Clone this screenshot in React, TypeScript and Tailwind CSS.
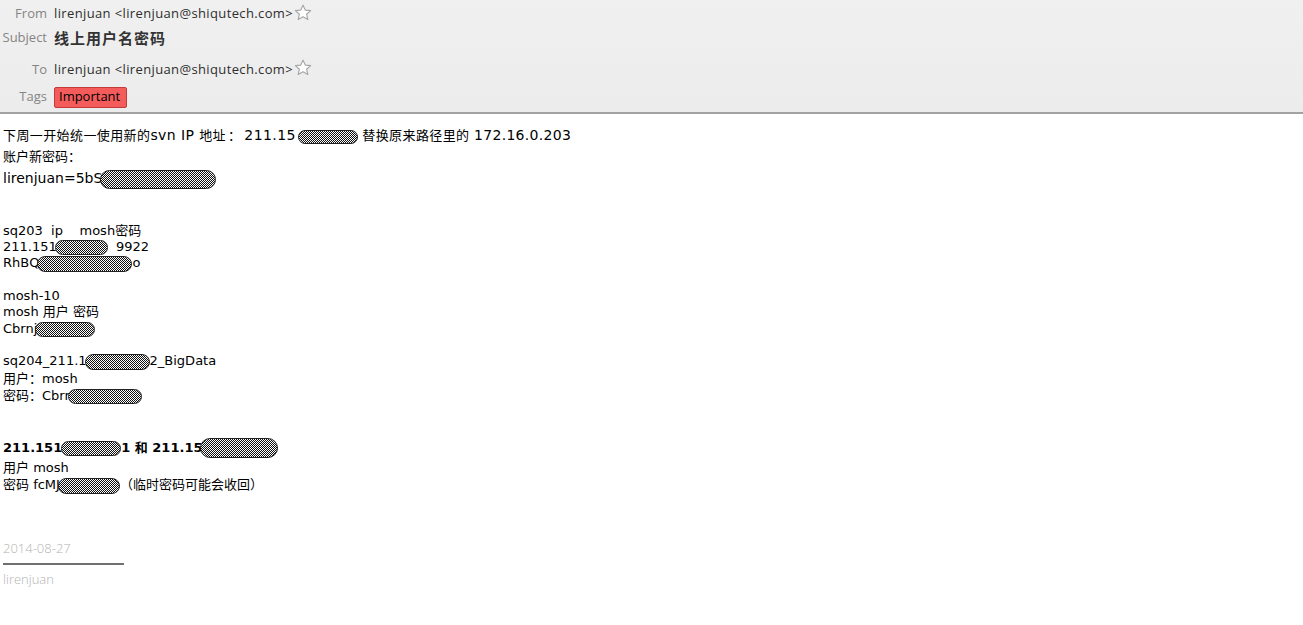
import React from 'react';

const BODY_FONT = "font-['DejaVu_Sans','Noto_Sans_CJK_SC',sans-serif]";

// checkered scribble used to hide sensitive values
const Blot = ({ w, h = 15, className = '' }: { w: number; h?: number; className?: string }) => (
  <span
    className={`inline-block align-middle rounded-full border border-[#222] bg-[repeating-conic-gradient(#111_0_25%,#fff_0_50%)] bg-size-[2px_2px] ${className}`}
    style={{ width: w, height: h }}
  />
);

const Star = () => (
  <svg width="18" height="18" viewBox="0 0 16 16" className="ml-[1px] -mt-[3px] shrink-0">
    <path
      d="M8 1l2 4.4 4.8.5-3.6 3.2 1.1 4.7L8 11.3l-4.3 2.5 1.1-4.7L1.2 5.9 6 5.4z"
      fill="#fff"
      stroke="#a5a5a5"
      strokeWidth="1"
      strokeLinejoin="round"
    />
  </svg>
);

const HeaderRow = ({ label, children, className = '' }: { label: string; children: React.ReactNode; className?: string }) => (
  <div className={`flex items-center ${className}`}>
    <div className="w-[47px] shrink-0 text-right text-[13px] text-[#858585]">{label}</div>
    <div className="ml-[7px] flex items-center text-[13px] text-[#2e2e2e]">{children}</div>
  </div>
);

export default function App() {
  return (
    <div className="min-h-[625px] w-[1303px] bg-white">
      {/* Header */}
      <div className="h-[114px] border-b-2 border-[#a2a2a2] bg-gradient-to-b from-[#f0f0f0] to-[#ececec] pt-[4px] font-['Open_Sans','Noto_Sans_CJK_SC',sans-serif]">
        <HeaderRow label="From" className="h-[20px]">
          <span className="tracking-[0.37px]">lirenjuan &lt;lirenjuan@shiqutech.com&gt;</span>
          <Star />
        </HeaderRow>
        <HeaderRow label="Subject" className="h-[28px]">
          <span className="text-[15px] font-bold text-[#333] tracking-[1px]">线上用户名密码</span>
        </HeaderRow>
        <HeaderRow label="To" className="mt-[2px] h-[31px]">
          <span className="tracking-[0.37px]">lirenjuan &lt;lirenjuan@shiqutech.com&gt;</span>
          <Star />
        </HeaderRow>
        <HeaderRow label="Tags" className="h-[24px]">
          <span className="inline-flex h-[21px] w-[73px] items-center rounded-[2px] border border-[#c23a3a] bg-[#f45c5c] pl-[4px] text-[13px] text-black">
            Important
          </span>
        </HeaderRow>
      </div>

      {/* Body */}
      <div className={`pl-[3px] pt-[10px] text-black ${BODY_FONT}`}>
        <div className="h-[22px] leading-[22px] text-[13px] whitespace-pre">
          <span className="tracking-[0.4px]">
            下周一开始统一使用新的<span className="text-[14px]">svn IP </span>地址<span className="ml-[2px] mr-[3px]">：</span><span className="text-[14px]">211.15</span>
          </span>
          <Blot w={60} h={14} className="ml-[2px]" />
          <span className="tracking-[0.4px]"> 替换原来路径里的 <span className="text-[14px] tracking-[0.3px]">172.16.0.203</span></span>
        </div>
        <div className="h-[22px] leading-[22px] text-[13px]">账户新密码：</div>
        <div className="h-[21px] leading-[21px] text-[14px] whitespace-pre">
          lirenjuan=5bS<Blot w={116} h={19} className="-ml-[2px]" />
        </div>

        <div className="mt-[34px] text-[13px] leading-[16px]">
          <div className="whitespace-pre">sq203  ip    mosh密码</div>
          <div className="whitespace-pre">211.151<Blot w={53} h={15} className="-ml-[2px]" />  9922</div>
          <div className="whitespace-pre">RhBQ<Blot w={95} h={16} className="-ml-[2px]" />o</div>
        </div>

        <div className="mt-[16px] text-[13px] leading-[16.5px]">
          <div>mosh-10</div>
          <div className="whitespace-pre">mosh 用户 密码</div>
          <div className="whitespace-pre">Cbrnj<Blot w={60} h={15} className="-ml-[2px]" /></div>
        </div>

        <div className="mt-[15px] text-[13px] leading-[17.5px]">
          <div className="whitespace-pre">sq204_211.1<Blot w={65} h={16} className="-ml-[2px]" />2_BigData</div>
          <div>用户：mosh</div>
          <div className="whitespace-pre">密码：Cbrr<Blot w={74} h={15} className="-ml-[2px]" /></div>
        </div>

        <div className="mt-[33px] text-[13px] font-bold leading-[20px] whitespace-pre">
          211.151<Blot w={60} h={15} className="-ml-[1px]" />1 和 211.15<Blot w={78} h={20} className="-ml-[2px]" />
        </div>
        <div className="text-[13px] leading-[17px]">
          <div className="mt-[1px]">用户 mosh</div>
          <div className="whitespace-pre">密码 fcMJ<Blot w={62} h={16} className="-ml-[2px]" />（临时密码可能会收回）</div>
        </div>

        <div className="mt-[45px] text-[13px] leading-[18px] text-[#b3b3b3] font-['Open_Sans',sans-serif] font-light">2014-08-27</div>
        <div className="mt-[6px] h-[2px] w-[121px] bg-[#707070]" />
        <div className="mt-[5px] text-[13px] leading-[18px] text-[#b3b3b3] font-['Open_Sans',sans-serif] font-light">lirenjuan</div>
      </div>
    </div>
  );
}
